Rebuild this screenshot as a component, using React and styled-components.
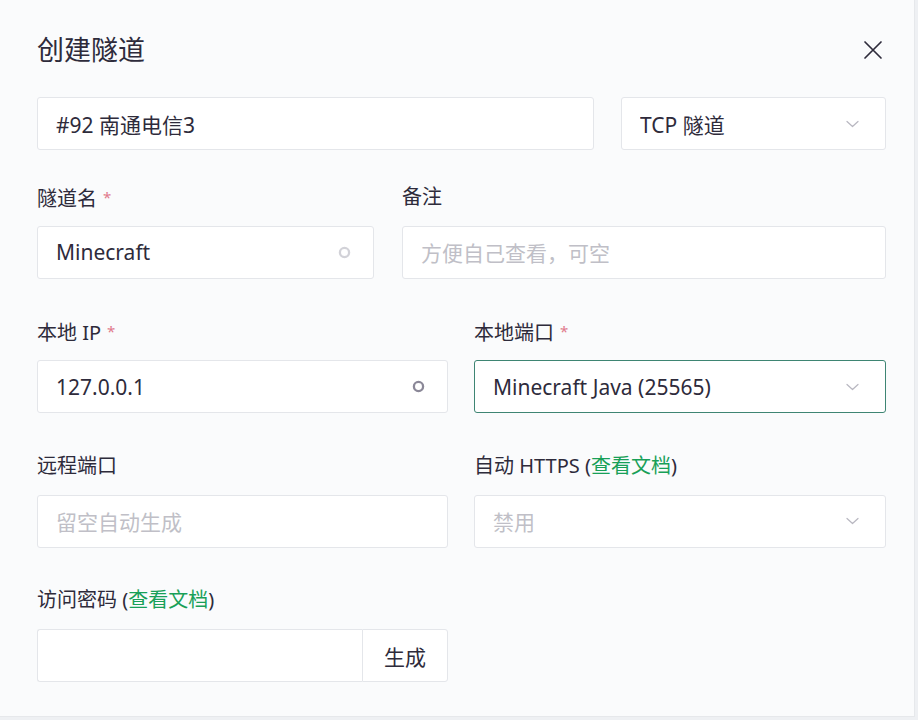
import React from 'react'
import styled, { createGlobalStyle } from 'styled-components'

const GlobalStyle = createGlobalStyle`
    html, body {
        margin: 0;
        padding: 0;
        background: #eef0f3;
    }
    body {
        font-family: 'Noto Sans', 'Noto Sans CJK SC', sans-serif;
    }
`

const Card = styled.div`
    box-sizing: border-box;
    width: 915px;
    height: 717px;
    background: #fafbfc;
    border-right: 1px solid #e6e8eb;
    border-bottom: 1px solid #e6e8eb;
    padding: 32px 29px 0 37px;
    color: #2e2b3b;
`

const Header = styled.div`
    display: flex;
    align-items: center;
    justify-content: space-between;
    height: 36px;
    margin-bottom: 29px;
`

const Title = styled.h1`
    margin: 0;
    font-size: 27px;
    font-weight: 400;
    line-height: 36px;
`

const CloseButton = styled.button`
    display: flex;
    align-items: center;
    justify-content: center;
    width: 24px;
    height: 24px;
    padding: 0;
    border: none;
    background: none;
    color: #2e2b3b;
    cursor: pointer;
`

const Form = styled.div`
    width: 849px;
    display: flex;
    flex-direction: column;
    gap: 37.6px;
`

const Row = styled.div`
    display: grid;
    grid-template-columns: ${p => p.$cols};
    column-gap: ${p => p.$gap}px;
    margin-bottom: ${p => p.$after || 0}px;
`

const Item = styled.div`
    display: flex;
    flex-direction: column;
`

const Label = styled.div`
    font-size: 20px;
    line-height: 30px;
    height: 30px;
    margin-bottom: 14px;
    white-space: nowrap;
`

const Star = styled.span`
    color: #e07a8c;
    font-size: 15px;
    margin-left: 6px;
    vertical-align: 3px;
`

const DocLink = styled.a`
    color: #18a058;
    text-decoration: none;
`

const Field = styled.div`
    box-sizing: border-box;
    height: 53px;
    display: flex;
    align-items: center;
    padding: 0 ${p => (p.$select ? 26 : 22)}px 0 18px;
    background: #fff;
    border: ${p => (p.$focus ? '1.5px solid #3e8573' : '1px solid #e4e6ea')};
    border-radius: 3px;
    font-size: 21px;
    color: ${p => (p.$placeholder ? '#c0bfc7' : '#2e2b3b')};
    white-space: nowrap;
`

const FieldText = styled.span`
    flex: 1;
    overflow: hidden;
`

const Group = styled.div`
    display: flex;
    height: 53px;
`

const GroupInput = styled.div`
    flex: 1;
    box-sizing: border-box;
    background: #fff;
    border: 1px solid #e4e6ea;
    border-right: none;
    border-radius: 3px 0 0 3px;
`

const GroupButton = styled.button`
    width: 86px;
    box-sizing: border-box;
    background: #fff;
    border: 1px solid #e4e6ea;
    border-radius: 0 3px 3px 0;
    font-family: inherit;
    font-size: 21px;
    color: #2e2b3b;
    cursor: pointer;
`

function Chevron() {
    return (
        <svg width="13" height="8" viewBox="0 0 13 8" fill="none">
            <path d="M1 1.5 L6.5 6.5 L12 1.5" stroke="#b8b7c0" strokeWidth="1.2" strokeLinecap="round" strokeLinejoin="round" />
        </svg>
    )
}

function Ring({ light }) {
    return (
        <svg width="13" height="13" viewBox="0 0 13 13" fill="none">
            <circle cx="6.5" cy="6.5" r="4.6" stroke={light ? '#d2d2d8' : '#8b8898'} strokeWidth="2.3" />
        </svg>
    )
}

function CloseIcon() {
    return (
        <svg width="20" height="20" viewBox="0 0 20 20" fill="none">
            <path d="M2 2 L18 18 M18 2 L2 18" stroke="#2e2b3b" strokeWidth="1.7" strokeLinecap="round" />
        </svg>
    )
}

function App() {
    return (
        <Card>
            <GlobalStyle />
            <Header>
                <Title>创建隧道</Title>
                <CloseButton aria-label="close"><CloseIcon /></CloseButton>
            </Header>
            <Form>
                <Row $cols="557px 265px" $gap={27} $after={-6}>
                    <Field><FieldText>#92 南通电信3</FieldText></Field>
                    <Field $select><FieldText>TCP 隧道</FieldText><Chevron /></Field>
                </Row>
                <Row $cols="337px 484px" $gap={28}>
                    <Item>
                        <Label>隧道名<Star>*</Star></Label>
                        <Field><FieldText>Minecraft</FieldText><Ring light /></Field>
                    </Item>
                    <Item>
                        <Label>备注</Label>
                        <Field $placeholder><FieldText>方便自己查看，可空</FieldText></Field>
                    </Item>
                </Row>
                <Row $cols="411px 412px" $gap={26}>
                    <Item>
                        <Label>本地 IP<Star>*</Star></Label>
                        <Field><FieldText>127.0.0.1</FieldText><Ring /></Field>
                    </Item>
                    <Item>
                        <Label>本地端口<Star>*</Star></Label>
                        <Field $select $focus><FieldText>Minecraft Java (25565)</FieldText><Chevron /></Field>
                    </Item>
                </Row>
                <Row $cols="411px 412px" $gap={26}>
                    <Item>
                        <Label>远程端口</Label>
                        <Field $placeholder><FieldText>留空自动生成</FieldText></Field>
                    </Item>
                    <Item>
                        <Label>自动 HTTPS (<DocLink href="#">查看文档</DocLink>)</Label>
                        <Field $select $placeholder><FieldText>禁用</FieldText><Chevron /></Field>
                    </Item>
                </Row>
                <Row $cols="411px 412px" $gap={26}>
                    <Item>
                        <Label>访问密码 (<DocLink href="#">查看文档</DocLink>)</Label>
                        <Group>
                            <GroupInput />
                            <GroupButton>生成</GroupButton>
                        </Group>
                    </Item>
                </Row>
            </Form>
        </Card>
    )
}

export default App
